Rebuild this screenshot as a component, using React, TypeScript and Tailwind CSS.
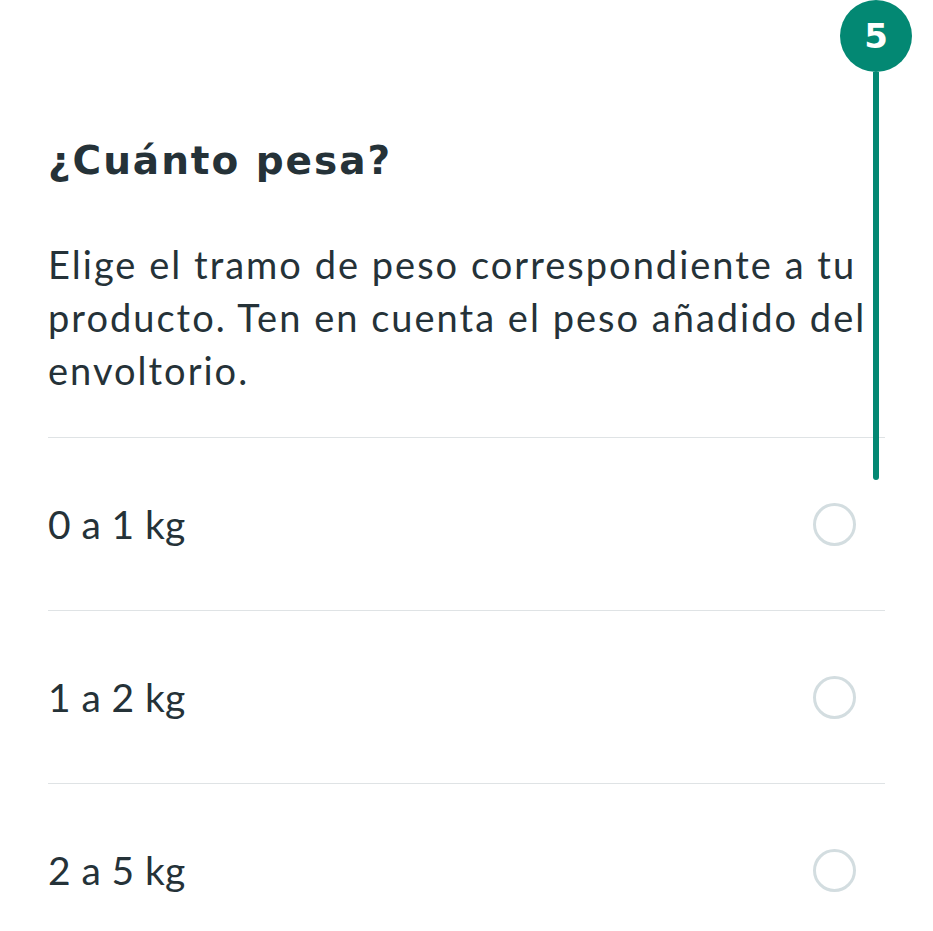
const options = ['0 a 1 kg', '1 a 2 kg', '2 a 5 kg']

export default function App() {
  return (
    <div
      className="relative h-[931px] w-[933px] overflow-hidden bg-white text-[#253238]"
      style={{ fontFamily: 'Lato, "Noto Sans", sans-serif' }}
    >
      {/* step marker */}
      <div className="absolute left-[840px] top-0 flex flex-col items-center">
        <div className="flex h-[72px] w-[72px] items-center justify-center rounded-full bg-[#038873] font-['DejaVu_Sans',sans-serif] text-[34px] font-bold text-white">
          5
        </div>
        <div className="h-[408px] w-[6px] rounded-b-full bg-[#038873]" />
      </div>

      <div className="px-12 pt-[137px]">
        <h1 className="font-['DejaVu_Sans',sans-serif] text-[39px] font-bold leading-[48px] tracking-[0.05em]">
          ¿Cuánto pesa?
        </h1>
        <p className="mt-[53px] whitespace-nowrap text-[38px] leading-[53px] tracking-[0.053em]">
          Elige el tramo de peso correspondiente a tu
          <br />
          producto. Ten en cuenta el peso añadido del
          <br />
          envoltorio.
        </p>

        <div className="mt-[40px]">
          {options.map((o) => (
            <div
              key={o}
              className="flex h-[173px] items-center justify-between border-t border-[#dfe3e5] pr-[29px]"
            >
              <span className="text-[39px] leading-[46px] tracking-[0.01em]">{o}</span>
              <span className="h-[43px] w-[43px] rounded-full border-[3px] border-[#d3dde0]" />
            </div>
          ))}
        </div>
      </div>
    </div>
  )
}
